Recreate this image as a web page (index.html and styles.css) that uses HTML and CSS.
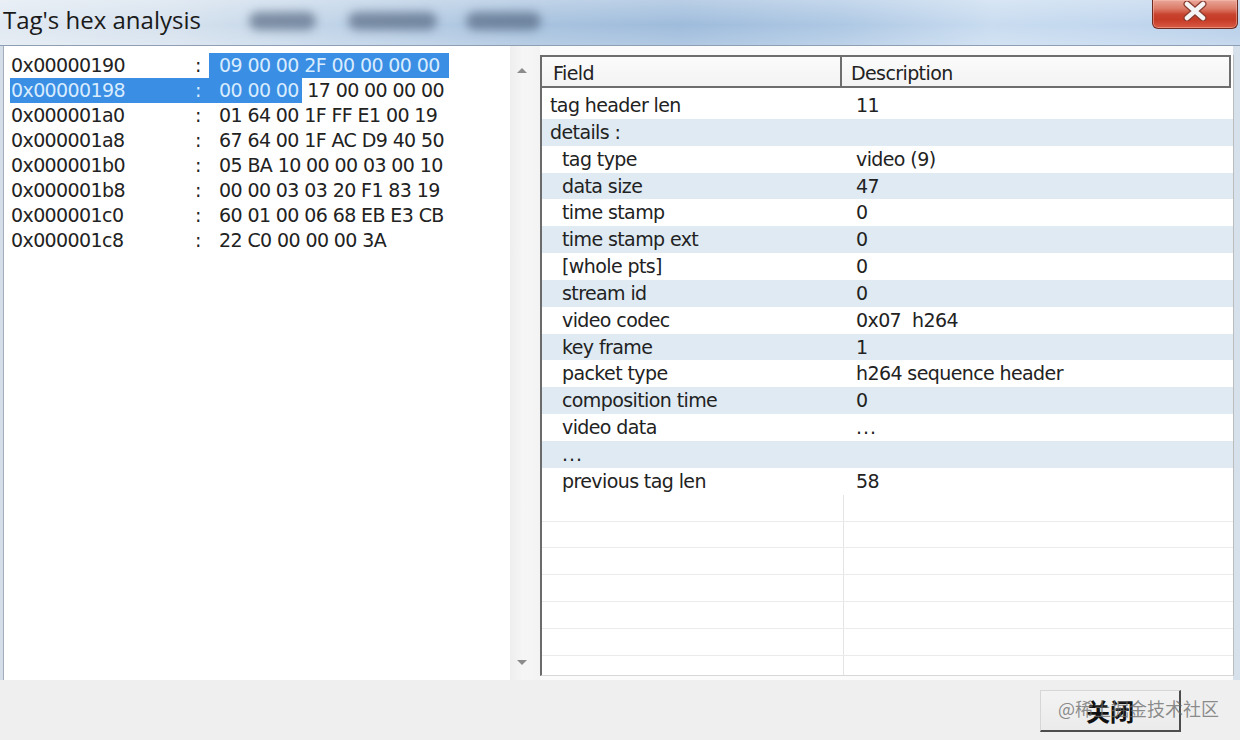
FILE: index.html
```html
<!DOCTYPE html>
<html>
<head>
<meta charset="utf-8">
<title>Tag's hex analysis</title>
<link rel="stylesheet" href="styles.css">
</head>
<body>
<div class="window">
  <div class="titlebar">
    <span class="title">Tag's hex analysis</span>
    <span class="blur b1"></span>
    <span class="blur b2"></span>
    <span class="blur b3"></span>
    <div class="close">
      <svg width="26" height="20" viewBox="0 0 26 20">
        <path d="M5 3 L21 17 M21 3 L5 17" stroke="#8a3b2f" stroke-width="7" stroke-linecap="round" fill="none"/>
        <path d="M5 3 L21 17 M21 3 L5 17" stroke="#f4f4f4" stroke-width="4.5" stroke-linecap="round" fill="none"/>
      </svg>
    </div>
  </div>
  <div class="content">
    <div class="main">
      <div class="hexpane">
        <div class="hexlist">
          <div class="hrow"><span class="addr">0x00000190</span><span class="colon">:</span><span class="bytes"><span class="sel full">09 00 00 2F 00 00 00 00</span></span></div>
          <div class="hrow"><span class="addr hl">0x00000198</span><span class="colon hl">:</span><span class="bytes"><span class="sel part">00 00 00</span> 17 00 00 00 00</span></div>
          <div class="hrow"><span class="addr">0x000001a0</span><span class="colon">:</span><span class="bytes">01 64 00 1F FF E1 00 19</span></div>
          <div class="hrow"><span class="addr">0x000001a8</span><span class="colon">:</span><span class="bytes">67 64 00 1F AC D9 40 50</span></div>
          <div class="hrow"><span class="addr">0x000001b0</span><span class="colon">:</span><span class="bytes">05 BA 10 00 00 03 00 10</span></div>
          <div class="hrow"><span class="addr">0x000001b8</span><span class="colon">:</span><span class="bytes">00 00 03 03 20 F1 83 19</span></div>
          <div class="hrow"><span class="addr">0x000001c0</span><span class="colon">:</span><span class="bytes">60 01 00 06 68 EB E3 CB</span></div>
          <div class="hrow"><span class="addr">0x000001c8</span><span class="colon">:</span><span class="bytes">22 C0 00 00 00 3A</span></div>
        </div>
        <div class="vscroll">
          <span class="arr up"></span>
          <span class="arr down"></span>
        </div>
      </div>
      <div class="lvwrap">
        <div class="listview">
          <div class="lvhead">
            <div class="hc hf">Field</div>
            <div class="hc hd">Description</div>
          </div>
          <div class="lvbody">
            <div class="lr"><span class="c1">tag header len</span><span class="c2">11</span></div>
            <div class="lr band"><span class="c1">details :</span><span class="c2"></span></div>
            <div class="lr"><span class="c1 ind">tag type</span><span class="c2">video (9)</span></div>
            <div class="lr band"><span class="c1 ind">data size</span><span class="c2">47</span></div>
            <div class="lr"><span class="c1 ind">time stamp</span><span class="c2">0</span></div>
            <div class="lr band"><span class="c1 ind">time stamp ext</span><span class="c2">0</span></div>
            <div class="lr"><span class="c1 ind">[whole pts]</span><span class="c2">0</span></div>
            <div class="lr band"><span class="c1 ind">stream id</span><span class="c2">0</span></div>
            <div class="lr"><span class="c1 ind">video codec</span><span class="c2">0x07&nbsp; h264</span></div>
            <div class="lr band"><span class="c1 ind">key frame</span><span class="c2">1</span></div>
            <div class="lr"><span class="c1 ind">packet type</span><span class="c2">h264 sequence header</span></div>
            <div class="lr band"><span class="c1 ind">composition time</span><span class="c2">0</span></div>
            <div class="lr"><span class="c1 ind">video data</span><span class="c2 dots">...</span></div>
            <div class="lr band"><span class="c1 ind dots">...</span><span class="c2"></span></div>
            <div class="lr"><span class="c1 ind">previous tag len</span><span class="c2">58</span></div>
            <div class="lr empty"><span class="c1"></span><span class="c2"></span></div>
            <div class="lr empty"><span class="c1"></span><span class="c2"></span></div>
            <div class="lr empty"><span class="c1"></span><span class="c2"></span></div>
            <div class="lr empty"><span class="c1"></span><span class="c2"></span></div>
            <div class="lr empty"><span class="c1"></span><span class="c2"></span></div>
            <div class="lr empty"><span class="c1"></span><span class="c2"></span></div>
            <div class="lr empty last"><span class="c1"></span><span class="c2"></span></div>
          </div>
        </div>
      </div>
    </div>
    <div class="footer">
      <button class="btn">关闭</button>
      <span class="watermark">@稀土掘金技术社区</span>
    </div>
  </div>
</div>
</body>
</html>
```

FILE: styles.css
```css
* {
  box-sizing: border-box;
}

body {
  margin: 0;
  width: 1240px;
  height: 740px;
  overflow: hidden;
  background: #eff0f2;
  font-family: "DejaVu Sans", "Liberation Sans", sans-serif;
  color: #222222;
}

.window {
  width: 1240px;
  height: 740px;
  display: flex;
  flex-direction: column;
}

/* ---------- title bar ---------- */
.titlebar {
  height: 46px;
  flex: none;
  display: flex;
  align-items: flex-start;
  border-bottom: 1px solid #8e9fb4;
  background:
    linear-gradient(180deg, rgba(255, 255, 255, 0.28) 0%, rgba(255, 255, 255, 0) 55%, rgba(255, 255, 255, 0.18) 100%),
    linear-gradient(90deg, #e1e9f2 0%, #d6e2ee 14%, #c1d4e8 26%, #a9c3df 42%, #9fbcdc 55%, #aec8e4 68%, #c9dcf0 80%, #c2d7ee 90%, #b9d0e9 100%);
}

.title {
  flex: none;
  width: 246px;
  padding-left: 3px;
  font-family: "Open Sans", "Liberation Sans", sans-serif;
  font-size: 24px;
  line-height: 40px;
  color: #1a1a1a;
  white-space: nowrap;
}

.blur {
  flex: none;
  height: 18px;
  margin-top: 12px;
  border-radius: 9px;
  background: rgba(70, 88, 115, 0.6);
  filter: blur(5px);
}

.b1 { width: 67px; margin-left: 3px; }
.b2 { width: 89px; margin-left: 32px; }
.b3 { width: 75px; margin-left: 29px; }

.close {
  flex: none;
  margin-left: auto;
  margin-right: 2px;
  width: 86px;
  height: 29px;
  border: 1px solid #6e2b20;
  border-top: none;
  border-radius: 0 0 6px 6px;
  background: linear-gradient(180deg, #e9a697 0%, #dc7d6b 30%, #c8432e 52%, #c63b26 70%, #d85a43 100%);
  box-shadow: inset 0 0 0 1px rgba(255, 200, 190, 0.45);
  display: flex;
  justify-content: center;
  align-items: flex-start;
  padding-top: 1px;
}

/* ---------- content ---------- */
.content {
  flex: 1;
  display: flex;
  flex-direction: column;
}

.main {
  height: 634px;
  flex: none;
  display: flex;
  background: #fbfbfb;
  border-left: 3px solid #d3dee9;
}

.hexpane {
  width: 537px;
  flex: none;
  display: flex;
  background: #ffffff;
  border-left: 1px solid #a1adbb;
}

.hexlist {
  width: 506px;
  flex: none;
  padding: 7px 0 0 6px;
}

.hrow {
  display: flex;
  height: 25px;
  line-height: 25px;
  font-size: 19px;
  letter-spacing: -0.6px;
  white-space: pre;
}

.addr {
  width: 180px;
  padding-left: 1px;
}

.colon {
  width: 19px;
  padding-left: 5px;
}

.hl,
.sel {
  background: #3a8ee4;
  color: #d8ecff;
}

.sel.full {
  display: inline-block;
  padding: 0 9px 0 10px;
}

.sel.part {
  display: inline-block;
  padding: 0 3px 0 10px;
}

.hrow .bytes:not(:has(.sel)) {
  padding-left: 10px;
}

.vscroll {
  width: 30px;
  flex: none;
  display: flex;
  flex-direction: column;
  justify-content: space-between;
  align-items: center;
  padding: 22px 6px 15px 0;
  background: linear-gradient(90deg, #eeeeee 0%, #f6f6f6 45%, #f3f3f3 100%);
}

.arr {
  width: 0;
  height: 0;
  border-left: 5px solid transparent;
  border-right: 5px solid transparent;
}

.arr.up {
  border-bottom: 5px solid #8c8c8c;
}

.arr.down {
  border-top: 5px solid #8c8c8c;
}

/* ---------- list view ---------- */
.lvwrap {
  flex: 1;
  display: flex;
  flex-direction: column;
  padding: 9px 6px 4px 0;
  background: linear-gradient(90deg, #fbfbfb 0%, #fbfbfb 99%, #d7e1eb 99%);
}

.listview {
  flex: 1;
  display: flex;
  flex-direction: column;
  overflow: hidden;
  background: #ffffff;
  border-left: 2px solid #6b6b6b;
  border-right: 1px solid #bcbcbc;
  border-bottom: 1px solid #d8d8d8;
}

.lvhead {
  flex: none;
  display: flex;
  height: 33px;
  margin-right: 2px;
  border-top: 2px solid #6e6e6e;
  border-bottom: 2px solid #6e6e6e;
  border-right: 2px solid #6e6e6e;
  background: linear-gradient(180deg, #fbfbfb 0%, #f3f3f3 100%);
  font-size: 19px;
  letter-spacing: -0.6px;
  line-height: 32px;
}

.hc.hf {
  width: 300px;
  padding-left: 11px;
  border-right: 2px solid #6e6e6e;
}

.hc.hd {
  padding-left: 9px;
}

.lvbody {
  padding-top: 4px;
}

.lr {
  display: flex;
  height: 26.85px;
  line-height: 26.85px;
  font-size: 19px;
  letter-spacing: -0.6px;
  white-space: pre;
}

.lr.band {
  background: #dfeaf3;
}

.c1 {
  width: 302px;
  flex: none;
  padding-left: 8px;
}

.c1.ind {
  padding-left: 20px;
}

.c2 {
  flex: 1;
  padding-left: 12px;
}

.dots {
  letter-spacing: 1px;
}

.lr.empty {
  border-bottom: 1px solid #ebebeb;
}

.lr.empty .c1 {
  border-right: 1px solid #e4e4e4;
}

/* ---------- footer ---------- */
.footer {
  position: relative;
  flex: 1;
  display: flex;
  justify-content: flex-end;
  align-items: flex-start;
  padding: 10px 59px 0 0;
  background: #efefef;
}

.btn {
  width: 141px;
  height: 42px;
  margin: 0;
  padding: 0;
  background: linear-gradient(180deg, #f3f3f3 0%, #ebebeb 100%);
  border-top: 1px solid #d6d6d6;
  border-left: 1px solid #d6d6d6;
  border-right: 2px solid #4d4d4d;
  border-bottom: 2px solid #4d4d4d;
  font-family: "Noto Sans CJK SC", sans-serif;
  font-weight: bold;
  font-size: 24px;
  line-height: 38px;
  color: #111111;
}

.watermark {
  position: absolute;
  left: 1058px;
  top: 15px;
  font-family: "Noto Sans CJK SC", sans-serif;
  font-size: 18px;
  line-height: 26px;
  color: rgba(105, 105, 105, 0.75);
  white-space: nowrap;
}
```
